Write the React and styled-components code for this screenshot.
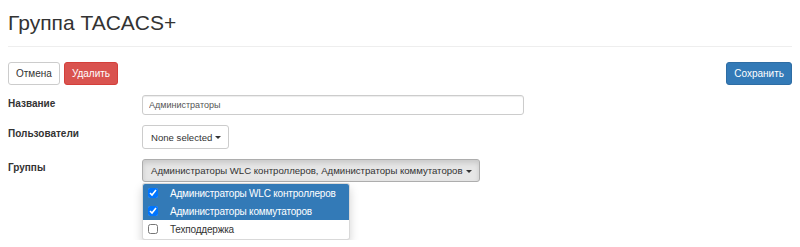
import React from 'react'
import styled, { createGlobalStyle, css } from 'styled-components';

const GlobalStyle = createGlobalStyle`
  body {
    margin: 0;
    font-family: "Liberation Sans", Arial, sans-serif;
    font-size: 10px;
    color: #333;
    background: #fff;
  }
`;

const Page = styled.div`
  padding: 11px 8px 0;
`;

const Title = styled.h2`
  margin: 0;
  font-size: 21px;
  font-weight: 400;
  line-height: 24px;
  color: #333;
`;

const Divider = styled.hr`
  margin: 11px 0 15px;
  border: none;
  border-top: 1px solid #eee;
`;

const Toolbar = styled.div`
  display: flex;
  justify-content: space-between;
  align-items: center;
`;

const Group = styled.div`
  display: flex;
  gap: 4px;
`;

const variants = {
  default: css`
    background: #fff;
    border-color: #ccc;
    color: #333;
  `,
  danger: css`
    background: #d9534f;
    border-color: #d43f3a;
    color: #fff;
  `,
  primary: css`
    background: #337ab7;
    border-color: #2e6da4;
    color: #fff;
  `,
};

const Button = styled.button`
  font-family: inherit;
  font-size: 10px;
  line-height: 15px;
  height: 23px;
  padding: 3px 7px;
  border: 1px solid;
  border-radius: 3px;
  cursor: pointer;
  ${p => variants[p.$variant || 'default']}
`;

const Form = styled.div`
  display: grid;
  grid-template-columns: 134px 1fr;
  row-gap: 10px;
  margin-top: 10px;
`;

const Label = styled.label`
  font-weight: bold;
  font-size: 10px;
  padding-top: 2px;
  line-height: 14px;
`;

const Input = styled.input`
  box-sizing: border-box;
  width: 382px;
  height: 20px;
  padding: 2px 6px;
  font-family: inherit;
  font-size: 9px;
  color: #555;
  border: 1px solid #ccc;
  border-radius: 3px;
  box-shadow: inset 0 1px 1px rgba(0,0,0,.075);
  outline: none;
`;

const Multi = styled.div`
  display: flex;
  flex-direction: column;
  align-items: flex-start;
  gap: 1px;
`;

const SelectButton = styled.button`
  font-family: inherit;
  font-size: 9.6px;
  line-height: 15px;
  height: ${p => p.$open ? 23 : 24}px;
  padding: 0 7px 0 8px;
  border: 1px solid ${p => p.$open ? '#adadad' : '#ccc'};
  border-radius: 3px;
  background: ${p => p.$open ? '#e6e6e6' : '#fff'};
  box-shadow: ${p => p.$open ? 'inset 0 3px 5px rgba(0,0,0,.125)' : 'none'};
  color: #333;
  display: flex;
  align-items: center;
  gap: 3px;
  cursor: pointer;
`;

const Caret = styled.span`
  display: inline-block;
  width: 0;
  height: 0;
  border-top: 3px solid #333;
  border-left: 3px solid transparent;
  border-right: 3px solid transparent;
  margin-top: 1px;
`;

const Menu = styled.ul`
  margin: 0;
  padding: 0 0 1px;
  list-style: none;
  width: 208px;
  box-sizing: border-box;
  background: #fff;
  border: 1px solid rgba(0,0,0,.15);
  border-radius: 3px;
  box-shadow: 0 5px 10px rgba(0,0,0,.175);
  overflow: hidden;
`;

const Item = styled.li`
  display: flex;
  align-items: center;
  gap: 12px;
  height: 18px;
  padding: 0 5px;
  font-size: 10px;
  letter-spacing: -0.2px;
  white-space: nowrap;
  background: ${p => p.$active ? '#337ab7' : '#fff'};
  color: ${p => p.$active ? '#fff' : '#333'};
`;

const Check = styled.input`
  margin: 0;
  width: 10px;
  height: 10px;
  flex: none;
`;

const groups = [
  { name: 'Администраторы WLC контроллеров', checked: true },
  { name: 'Администраторы коммутаторов', checked: true },
  { name: 'Техподдержка', checked: false },
];

export default function App() {
  return (
    <Page>
      <GlobalStyle />
      <Title>Группа TACACS+</Title>
      <Divider />
      <Toolbar>
        <Group>
          <Button>Отмена</Button>
          <Button $variant="danger">Удалить</Button>
        </Group>
        <Button $variant="primary">Сохранить</Button>
      </Toolbar>
      <Form>
        <Label>Название</Label>
        <div><Input defaultValue="Администраторы" /></div>
        <Label>Пользователи</Label>
        <Multi>
          <SelectButton>None selected <Caret /></SelectButton>
        </Multi>
        <Label>Группы</Label>
        <Multi>
          <SelectButton $open>
            Администраторы WLC контроллеров, Администраторы коммутаторов <Caret />
          </SelectButton>
          <Menu>
            {groups.map(g => (
              <Item key={g.name} $active={g.checked}>
                <Check type="checkbox" defaultChecked={g.checked} />
                {g.name}
              </Item>
            ))}
          </Menu>
        </Multi>
      </Form>
    </Page>
  )
}
